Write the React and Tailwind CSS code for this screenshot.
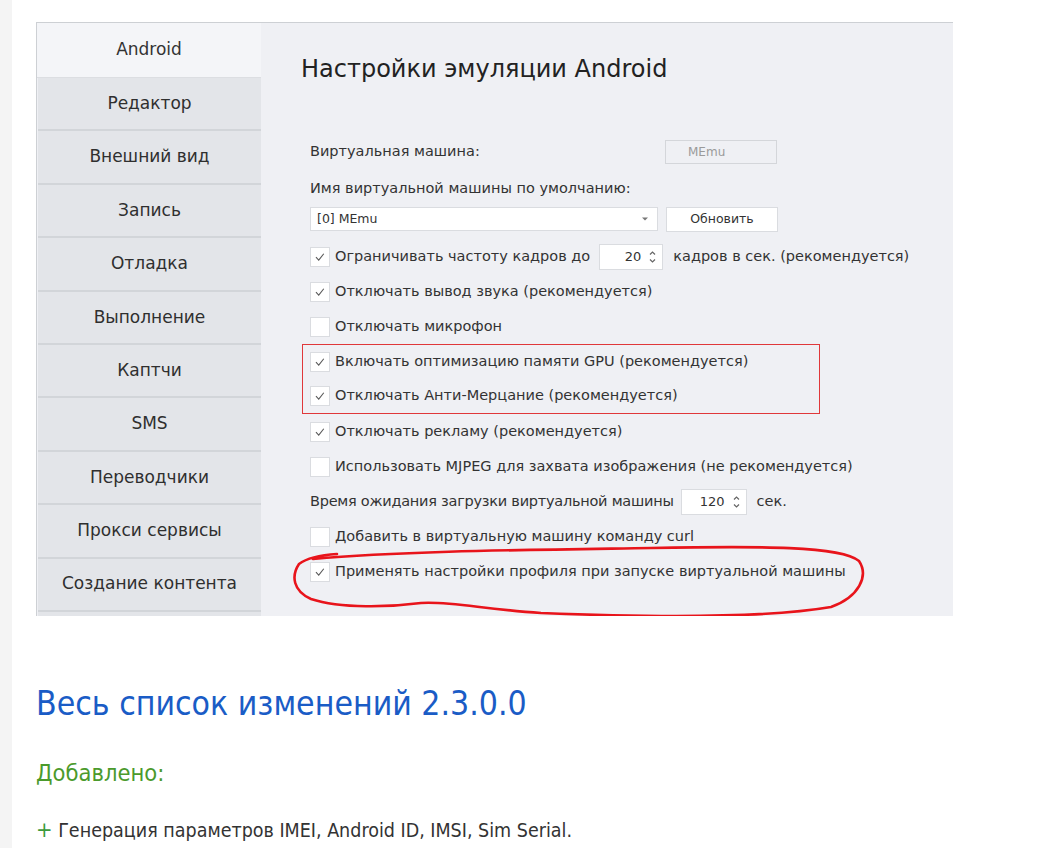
import React from 'react';

const tabs = [
  'Редактор',
  'Внешний вид',
  'Запись',
  'Отладка',
  'Выполнение',
  'Каптчи',
  'SMS',
  'Переводчики',
  'Прокси сервисы',
  'Создание контента',
  '',
];

const Check = ({ checked }) => (
  <span className="w-[20px] h-[20px] bg-white border border-[#dadce0] flex items-center justify-center shrink-0">
    {checked && (
      <svg width="20" height="20" viewBox="0 0 20 20">
        <path d="M5.5 10.2 L8.6 13.4 L14.2 6.4" fill="none" stroke="#5a5a5a" strokeWidth="1.2" />
      </svg>
    )}
  </span>
);

const CheckRow = ({ checked, label, h = 'h-[35px]' }) => (
  <div className={`flex items-center gap-[5px] ${h}`}>
    <Check checked={checked} />
    <span>{label}</span>
  </div>
);

const Spin = ({ value, w }) => (
  <span className={`${w} h-[26px] bg-white border border-[#dadce0] flex items-center justify-end pr-[6px] gap-[8px] text-[13px]`}>
    <span>{value}</span>
    <svg width="7" height="14" viewBox="0 0 7 14">
      <path d="M1 4.5 L3.5 2 L6 4.5" fill="none" stroke="#666" strokeWidth="1.2" />
      <path d="M1 9.5 L3.5 12 L6 9.5" fill="none" stroke="#666" strokeWidth="1.2" />
    </svg>
  </span>
);

const App = () => {
  return (
    <div className="flex min-h-[848px] bg-white font-['DejaVu_Sans',sans-serif] text-[#333]">
      <div className="w-[12px] bg-[#f4f4f4] shrink-0" />
      <div className="flex-1 pl-[24px] pt-[22px]">
        {/* screenshot panel */}
        <div className="relative w-[917px] h-[594px] bg-[#eff0f4] border-t border-l border-[#cdd0d4] flex overflow-hidden">
          <aside className="w-[224px] shrink-0 flex flex-col">
            <div className="h-[55px] shrink-0 bg-[#f4f5f8] flex items-center justify-center text-[17px] border-b border-[#dcdee2]">
              Android
            </div>
            {tabs.map((t, i) => (
              <div
                key={i}
                className="ml-[1px] h-[53.4px] shrink-0 bg-[#e3e5e9] border-b-2 border-[#d2d5d9] flex items-center justify-center text-[17px] text-[#2f2f2f]"
              >
                {t}
              </div>
            ))}
          </aside>

          <main className="flex-1 pl-[40px] text-[14.5px]">
            <h1 className="mt-[26px] h-[40px] flex items-center text-[24px] text-[#222]">
              Настройки эмуляции Android
            </h1>

            <div className="pl-[9px]">
              <div className="mt-[51px] h-[24px] flex items-center">
                <span className="w-[355px]">Виртуальная машина:</span>
                <span className="w-[112px] h-[24px] border border-[#d4d6da] text-[12px] text-[#9a9a9a] flex items-center pl-[22px]">
                  MEmu
                </span>
              </div>
              <div className="mt-[13px] h-[24px] flex items-center">Имя виртуальной машины по умолчанию:</div>
              <div className="mt-[6px] h-[24px] flex items-center gap-[8px]">
                <span className="w-[348px] h-[24px] bg-white border border-[#dadce0] flex items-center justify-between pl-[6px] pr-[8px] text-[12.5px]">
                  <span>[0] MEmu</span>
                  <svg width="8" height="6" viewBox="0 0 8 6">
                    <path d="M1 1.5 L7 1.5 L4 4.5 Z" fill="#777" />
                  </svg>
                </span>
                <span className="w-[112px] h-[25px] bg-white border border-[#dadce0] flex items-center justify-center text-[12.5px]">
                  Обновить
                </span>
              </div>

              <div className="mt-[8px]">
                <div className="flex items-center gap-[5px] h-[35px]">
                  <Check checked />
                  <span>Ограничивать частоту кадров до</span>
                  <span className="ml-[4px]">
                    <Spin value="20" w="w-[64px]" />
                  </span>
                  <span className="ml-[5px]">кадров в сек. (рекомендуется)</span>
                </div>
                <CheckRow checked label="Отключать вывод звука (рекомендуется)" />
                <CheckRow label="Отключать микрофон" />
                <div className="-ml-[8px] w-[518px] h-[70px] border border-[#e0383a] pl-[7px] flex flex-col justify-center">
                  <CheckRow checked h="h-[34px]" label="Включать оптимизацию памяти GPU (рекомендуется)" />
                  <CheckRow checked h="h-[34px]" label="Отключать Анти-Мерцание (рекомендуется)" />
                </div>
                <CheckRow checked label="Отключать рекламу (рекомендуется)" />
                <CheckRow label="Использовать MJPEG для захвата изображения (не рекомендуется)" />
                <div className="flex items-center h-[35px]">
                  <span className="tracking-[-0.25px]">Время ожидания загрузки виртуальной машины</span>
                  <span className="ml-[7px]">
                    <Spin value="120" w="w-[66px]" />
                  </span>
                  <span className="ml-[10px]">сек.</span>
                </div>
                <CheckRow label="Добавить в виртуальную машину команду curl" />
                <CheckRow checked label="Применять настройки профиля при запуске виртуальной машины" />
              </div>
            </div>
          </main>

          {/* hand drawn marker */}
          <svg className="absolute left-0 top-0 pointer-events-none" width="917" height="594" viewBox="36 22 917 594">
            <path
              d="M312 558 C 400 550, 520 549, 650 547 C 760 545, 840 545, 858 560 C 868 575, 858 596, 830 606 C 760 618, 640 616, 540 612 C 480 608, 450 600, 420 602 C 390 606, 340 608, 310 598 C 292 590, 290 575, 298 563 C 306 557, 320 554, 336 553"
              fill="none"
              stroke="#e8141b"
              strokeWidth="2.6"
              strokeLinecap="round"
            />
          </svg>
        </div>

        <h2 className="mt-[68px] text-[33.5px] leading-[40px] text-[#1a5cc6] font-['DejaVu_Sans_Condensed','DejaVu_Sans',sans-serif] [font-stretch:condensed]">
          Весь список изменений 2.3.0.0
        </h2>
        <p className="mt-[36px] text-[23.5px] leading-[26px] text-[#4b9a2c] font-['DejaVu_Sans_Condensed','DejaVu_Sans',sans-serif] [font-stretch:condensed]">
          Добавлено:
        </p>
        <p className="mt-[33px] text-[19.5px] leading-[22px] text-[#333] font-['DejaVu_Sans_Condensed','DejaVu_Sans',sans-serif] [font-stretch:condensed]">
          <span className="text-[#3c9a3c] text-[22px]">+</span> Генерация параметров IMEI, Android ID, IMSI, Sim Serial.
        </p>
      </div>
    </div>
  );
};

export default App;
